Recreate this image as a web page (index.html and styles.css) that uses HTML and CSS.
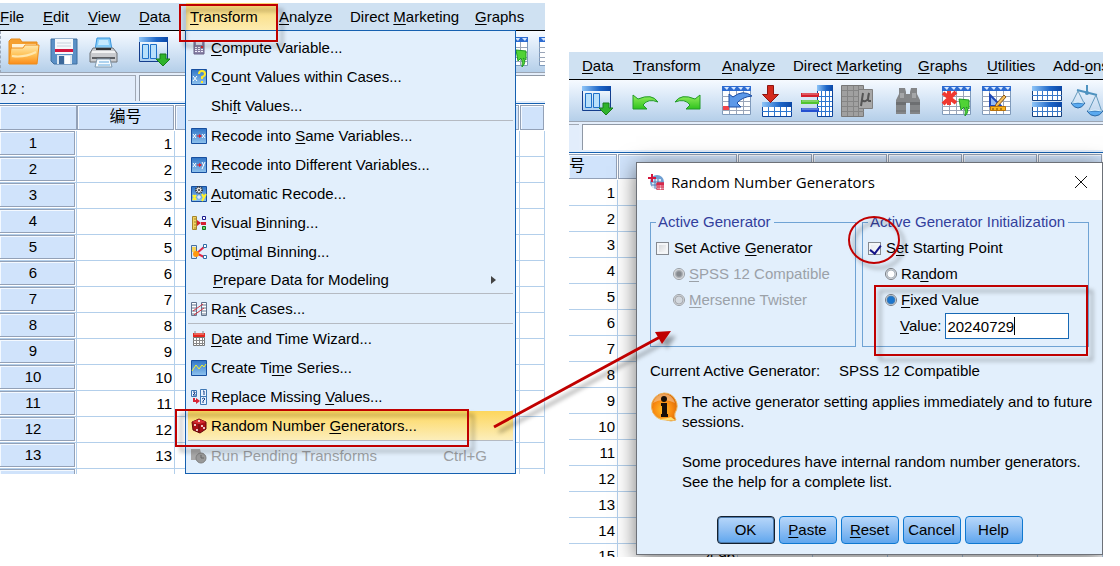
FILE: index.html
```html
<!DOCTYPE html>
<html lang="en">
<head>
<meta charset="utf-8">
<title>Random Number Generators</title>
<link rel="stylesheet" href="styles.css">
</head>
<body>
<svg class="defs" aria-hidden="true">
  <defs>
    <linearGradient id="gBlue" x1="0" x2="1" y1="0" y2="0"><stop offset="0" stop-color="#8fc6f8"/><stop offset=".6" stop-color="#1d66c8"/><stop offset="1" stop-color="#0b47a6"/></linearGradient>
    <linearGradient id="gPane" x1="0" x2="0" y1="0" y2="1"><stop offset="0" stop-color="#ffffff"/><stop offset="1" stop-color="#a9cdee"/></linearGradient>
    <linearGradient id="gFolder" x1="0" x2="0" y1="0" y2="1"><stop offset="0" stop-color="#ffe9b0"/><stop offset=".5" stop-color="#ffc45a"/><stop offset="1" stop-color="#fb8c1a"/></linearGradient>
    <linearGradient id="gGreen" x1="0" x2="0" y1="0" y2="1"><stop offset="0" stop-color="#93ee5c"/><stop offset="1" stop-color="#2fc31e"/></linearGradient>
    <linearGradient id="gTile" x1="0" x2="0" y1="0" y2="1"><stop offset="0" stop-color="#2f74c6"/><stop offset="1" stop-color="#8fc3ee"/></linearGradient>
    <radialGradient id="gInfo" cx=".45" cy=".6" r=".6"><stop offset="0" stop-color="#ffc02a"/><stop offset=".6" stop-color="#f98a10"/><stop offset="1" stop-color="#d96a05"/></radialGradient>
    <filter id="drop" x="-20%" y="-30%" width="150%" height="170%"><feDropShadow dx="5" dy="5" stdDeviation="2" flood-color="#000" flood-opacity=".35"/></filter>

    <symbol id="open" viewBox="0 0 32 32"><path d="M1 28V5l2-2h9l2 3h15v9" fill="#f5a030" stroke="#e58a1c"/><path d="M4 8h24v6H4z" fill="#fff3d6"/><path d="M3 12h12l2-3h14l-2 19H1z" fill="url(#gFolder)" stroke="#ee8d1b"/><path d="M4 20q12 2 24-4" stroke="#ffe7ad" stroke-width="2" fill="none"/></symbol>
    <symbol id="save" viewBox="0 0 32 32"><path d="M3 3h26v25H6l-3-3z" fill="#5b90c6" stroke="#3e6f9f"/><path d="M7 3h18v15H7z" fill="#f5f8fb"/><path d="M9 7h14M9 10h14" stroke="#c7d2dc"/><path d="M7 13h18v3H7z" fill="#d3173f"/><path d="M9 19h15v9H9z" fill="#dce6ee"/><path d="M11 20h5v8h-5z" fill="#3c689a"/><path d="M17 20h5v8h-5z" fill="#fff"/></symbol>
    <symbol id="print" viewBox="0 0 32 32"><path d="M9 2h13l2 12H7z" fill="#86cdf8" stroke="#3793dc"/><path d="M11 4h9l1 5H10z" fill="#c6ebff"/><path d="M5 12h20l4 5v9H2v-9z" fill="#c9cbcf" stroke="#6d7075"/><path d="M4 15h23v2H4z" fill="#f2f3f4"/><path d="M8 12h15v2H8z" fill="#333"/><path d="M4 21h23v2H4z" fill="#5c5f64"/><path d="M9 23h13l2 8H7z" fill="#f6fbff" stroke="#8199ad"/><path d="M11 26h10M10 29h12" stroke="#67aade"/></symbol>
    <symbol id="vars" viewBox="0 0 32 32"><path d="M1.500 1.500h28v24h-28z" fill="url(#gPane)" stroke="#143d8c"/><path d="M1 1h29v5H1z" fill="url(#gBlue)"/><path d="M4.500 8.500h6v14h-6zM12.500 8.500h6v14h-6z" fill="#b8e0fb" stroke="#1d70c8"/><path d="M22 18h6v5h4l-7 7-7-7h4z" fill="#2fb32b" stroke="#187d1c"/></symbol>
    <symbol id="undo" viewBox="0 0 32 32"><path d="M2 10v14h14l-4-4q5-7 15-3-6-9-20-3z" fill="url(#gGreen)" stroke="#229a2a"/></symbol>
    <symbol id="redo" viewBox="0 0 32 32"><path d="M29 10v14H15l4-4q-5-7-15-3 6-9 20-3z" fill="url(#gGreen)" stroke="#229a2a"/></symbol>
    <symbol id="grid" viewBox="0 0 32 32"><path d="M1.500 1.500h28v28h-28z" fill="#fff" stroke="#7f9abb"/><path d="M1 1h29v5H1z" fill="#2d6bd0"/><path d="M3 2h5l-2 3zM10 2h5l-2 3zM17 2h5l-2 3zM24 2h5l-2 3z" fill="#d7e8ff"/><path d="M8.500 6v23M15.500 6v23M22.500 6v23M1 11.500h28M1 16.500h28M1 21.500h28M1 25.500h28" stroke="#9aa5b8"/></symbol>
    <symbol id="goto" viewBox="0 0 32 32"><use href="#grid"/><path d="M2 21h6v4H2z" fill="#f0444b"/><path d="M8 9v13h12l-4-4q5-6 15-7-9-7-19 1z" fill="#5c98e8" stroke="#1d4ea5"/></symbol>
    <symbol id="addcase" viewBox="0 0 32 32"><path d="M1.500 17.500h29v14h-29z" fill="#fff" stroke="#0d449b"/><path d="M1 17h30v5H1z" fill="url(#gBlue)"/><path d="M7.500 22v9M13.500 22v9M19.500 22v9M25.500 22v9M1 26.500h30" stroke="#2d76cf"/><path d="M6.500.500h6v9h5l-8 8-8-8h5z" fill="#d42a1d" stroke="#8f1510"/></symbol>
    <symbol id="addvar" viewBox="0 0 32 32"><path d="M16.500.500h15v31h-15z" fill="#fff" stroke="#0d449b"/><path d="M16 0h16v6H16z" fill="url(#gBlue)"/><path d="M20.500 6v25M24.500 6v25M28.500 6v25M16 11.500h15M16 16.500h15M16 21.500h15M16 26.500h15" stroke="#2d76cf"/><path d="M0 8h18v4H0z" fill="#d4202b"/><path d="M0 15h18v4H0z" fill="#52c431"/><path d="M0 23h18v4H0z" fill="#2450d0"/><path d="M1 9h16M1 16h16M1 24h16" stroke="#fff" opacity=".5"/></symbol>
    <symbol id="mu" viewBox="0 0 32 32"><path d="M.500.500h22v31H.500z" fill="#a0a0a0" stroke="#787878"/><path d="M1 5.500h22M1 11.500h22M1 16.500h22M1 21.500h22M1 26.500h22M6.500 1v30M12.500 1v30M17.500 1v30" stroke="#858585"/><path d="M17.500 4.500h14v19h-14z" fill="#a8a8a8" stroke="#808080"/><path d="M22 8l-2 13M21 15q3 3 6-1l1-6q-2 7 0 8h2" fill="none" stroke="#555" stroke-width="2"/></symbol>
    <symbol id="find" viewBox="0 0 32 32"><path d="M8 3h6l1 4v2h4V7l1-4h6v6l3 6v14H19V18h-4v11H5V15l3-6z" fill="#848688"/><path d="M5 17h10v3H5zM19 17h10v3H19z" fill="#6d6f71"/><path d="M9 8h4v5H9zM21 8h4v5h-4z" fill="#a4a6a8"/><path d="M5 26h10M19 26h10" stroke="#6d6f71"/></symbol>
    <symbol id="missing" viewBox="0 0 32 32"><use href="#grid"/><path d="M8 6v14M2 8l13 10M15 7L2 19" stroke="#f03830" stroke-width="4"/><path d="M18 14l10 1v9l-3-2q4 4-1 9 1-6-1-9l-3 3z" fill="#50d335" stroke="#209a25"/></symbol>
    <symbol id="ruler" viewBox="0 0 32 32"><use href="#grid"/><path d="M9 10v11h11z" fill="#94baf4" stroke="#1e48b8" stroke-width="2"/><path d="M15 19l8-9 2 2-8 9-3 1z" fill="#f4c05b" stroke="#8b5819"/><path d="M9.500 21.500h15v4h-15z" fill="#f9b51c" stroke="#b8720c"/><path d="M12 23v2M16 23v2M20 23v2" stroke="#704509"/></symbol>
    <symbol id="split" viewBox="0 0 32 32"><path d="M1.500 1.500h29v14h-29zM1.500 17.500h29v14h-29z" fill="#fff" stroke="#153f7d"/><path d="M1 1h30v5H1zM1 17h30v5H1z" fill="url(#gBlue)"/><path d="M6.500 6v9M11.500 6v9M16.500 6v9M21.500 6v9M26.500 6v9M6.500 22v9M11.500 22v9M16.500 22v9M21.500 22v9M26.500 22v9M1 10.500h30M1 26.500h30" stroke="#3a78c8"/></symbol>
    <symbol id="scale" viewBox="0 0 32 32"><path d="M16 0v9M6 5l20 5" stroke="#4f93c0" stroke-width="2"/><circle cx="16" cy="8" r="2" fill="#4f93c0"/><path d="M7 6L1 18M7 6l6 12M25 10l-8 17M25 10l6 17" stroke="#669bbd" fill="none"/><path d="M0 18h14q-3 5-7 5t-7-5zM16 26h16q-3 5-8 5t-8-5z" fill="#5aaaf0" stroke="#2b69a5"/><path d="M1 18q6-2 12 0M17 26q7-2 14 0" stroke="#d8f2ff" fill="none"/></symbol>

    <symbol id="tile" viewBox="0 0 16 16"><path d="M.500.500h15v15H.500z" fill="url(#gTile)" stroke="#174f9f"/></symbol>
    <symbol id="calc" viewBox="0 0 16 16"><path d="M3 1h10v13H3z" fill="#8b83a8" stroke="#6b6288"/><path d="M5 2h6v3H5z" fill="#d7dbe8"/><path d="M4 7h2v1H4zM7 7h2v1H7zM4 9h2v1H4zM7 9h2v1H7zM10 9h2v1h-2zM4 11h2v1H4zM7 11h2v1H7zM10 11h2v1h-2z" fill="#f4f2ff"/><path d="M10 6h2v2h-2z" fill="#d92b2b"/></symbol>
    <symbol id="count" viewBox="0 0 16 16"><use href="#tile"/><path d="M2 7l4 5M6 7l-4 5" stroke="#fff"/><path d="M8 5q0-3 3-3t3 3q0 2-3 3v2M11 12v2" stroke="#ffe928" stroke-width="2" fill="none"/></symbol>
    <symbol id="same" viewBox="0 0 16 16"><use href="#tile"/><path d="M2 6l3 4M5 6l-3 4M11 6l3 4M14 6l-3 4" stroke="#fff"/><path d="M6 8h3" stroke="#e01c2c"/><path d="M8 6l3 2-3 2z" fill="#e01c2c"/></symbol>
    <symbol id="diff" viewBox="0 0 16 16"><use href="#tile"/><path d="M2 6l3 4M5 6l-3 4M11 5l2 4M14 5l-3 7" stroke="#fff"/><path d="M6 8h3" stroke="#e01c2c"/><path d="M8 6l3 2-3 2z" fill="#e01c2c"/></symbol>
    <symbol id="auto" viewBox="0 0 16 16"><use href="#tile"/><circle cx="8" cy="4" r="3" fill="#eee" stroke="#333" stroke-width="2" stroke-dasharray="1 1"/><circle cx="8" cy="4" r="1" fill="#333"/><path d="M2 9l3 5M5 9l-3 5M11 8l2 4M15 8l-4 7" stroke="#fff12a" stroke-width="2"/><path d="M6 11h4M8 9v4" stroke="#fff"/></symbol>
    <symbol id="visual" viewBox="0 0 16 16"><path d="M1.500 1.500h4v13h-4z" fill="#f2d462" stroke="#a4842c"/><path d="M3 4h2M3 7h2M3 10h2M3 13h2" stroke="#a4842c"/><path d="M6 5l4 3-4 3z" fill="#d51e2f"/><path d="M11.500 1.500h3v3h-3z" fill="#fff" stroke="#1a1a8e"/><path d="M10 7h5v3h-5z" fill="#d51e2f"/><path d="M11.500 11.500h3v3h-3z" fill="#6fd764" stroke="#157319"/></symbol>
    <symbol id="optimal" viewBox="0 0 16 16"><path d="M.500 1.500h5v13h-5z" fill="#dce9f6" stroke="#476f9d"/><path d="M1 3h4v5H1z" fill="#f4d35b"/><path d="M5 10l8-7M5 9l8 4" stroke="#e02848" stroke-width="2"/><circle cx="5" cy="10" r="3" fill="#ff980e"/><path d="M12.500.500h3v3h-3zM12.500 11.500h3v3h-3z" fill="#fff" stroke="#2f6da5"/></symbol>
    <symbol id="rank" viewBox="0 0 16 16"><path d="M.500 1.500h5v13h-5zM10.500 1.500h5v13h-5z" fill="#fff" stroke="#63758e"/><path d="M1 4h4M1 7h4M1 10h4M1 13h4M11 4h4M11 7h4M11 10h4M11 13h4" stroke="#63758e"/><path d="M2 10l10-7M3 14l10-7" stroke="#d5313d"/></symbol>
    <symbol id="date" viewBox="0 0 16 16"><path d="M2 2h12v4H2z" fill="#e32620"/><path d="M3 3h10" stroke="#ff9b8a"/><path d="M4 0v3M12 0v3" stroke="#888"/><path d="M2.500 6.500h11v8h-11z" fill="#fff" stroke="#777"/><path d="M5.500 7v8M8.500 7v8M11.500 7v8M2 9.500h12M2 12.500h12" stroke="#888"/></symbol>
    <symbol id="series" viewBox="0 0 16 16"><use href="#tile"/><path d="M1 11l4-6 3 4 3-4 2 2 2-3" stroke="#f4f12a" fill="none"/></symbol>
    <symbol id="replace" viewBox="0 0 16 16"><path d="M.500 1.500h5v6h-5zM9.500.500h6v15h-6zM9.500 7.500h6" fill="#e8f3ff" stroke="#3f78b5"/><path d="M2 3h2v1L2 6h3M12 2h1v4M11 10q2-2 3 0l-2 2v2" stroke="#173e86" fill="none"/><path d="M3 9v3h3" stroke="#d92535" stroke-width="2" fill="none"/><path d="M5 9l4 3-4 3z" fill="#d92535"/></symbol>
    <symbol id="dice" viewBox="0 0 16 16"><path d="M1 4l7-3 7 3v7l-6 4-7-3z" fill="#a80f15" stroke="#62080b"/><path d="M1 4l7 2 7-2-7-3z" fill="#d52d31"/><path d="M8 6v9" stroke="#62080b"/><circle cx="8" cy="3" r="1" fill="#fff"/><circle cx="4" cy="7" r="1" fill="#fff"/><circle cx="6" cy="12" r="1" fill="#fff"/><circle cx="11" cy="8" r="1" fill="#fff"/><circle cx="13" cy="10" r="1" fill="#fff"/></symbol>
    <symbol id="pending" viewBox="0 0 16 16"><path d="M0 1h9l1 4v7H0z" fill="#a8a8a8"/><circle cx="10" cy="10" r="5" fill="#999" stroke="#808080"/><path d="M10 7v3h3" stroke="#666" fill="none"/></symbol>
  </defs>
</svg>

<main class="stage">
  <section class="window" aria-label="Data editor with Transform menu">
    <nav class="menubar menubar-full">
      <button><u>F</u>ile</button><button><u>E</u>dit</button><button><u>V</u>iew</button><button><u>D</u>ata</button><button class="active"><u>T</u>ransform</button><button><u>A</u>nalyze</button><button>Direct <u>M</u>arketing</button><button><u>G</u>raphs</button>
    </nav>
    <div class="toolbar toolbar-full">
      <div class="group"><svg><use href="#open"/></svg><svg><use href="#save"/></svg><svg><use href="#print"/></svg></div>
      <div class="group"><svg><use href="#vars"/></svg></div>
      <div class="group"><svg><use href="#undo"/></svg><svg><use href="#redo"/></svg></div>
      <div class="group"><svg><use href="#goto"/></svg><svg><use href="#addcase"/></svg><svg><use href="#addvar"/></svg><svg><use href="#mu"/></svg></div>
      <div class="group"><svg><use href="#find"/></svg></div>
      <div class="group"><svg><use href="#missing"/></svg><svg><use href="#ruler"/></svg></div>
    </div>
    <div class="editor"><div class="cell-name">12 :</div><div class="cell-value"></div></div>
    <table class="sheet">
      <colgroup><col class="w-row"><col class="w-id"><col class="w-wide"><col class="w-std"><col class="w-std"><col class="w-std"><col></colgroup>
      <thead><tr><th class="corner"><span></span></th><th><span>编号</span></th><th><span></span></th><th><span></span></th><th><span></span></th><th><span></span></th><th><span></span></th></tr></thead>
      <tbody>
        <tr><th><span>1</span></th><td>1</td><td></td><td></td><td></td><td></td><td></td></tr>
        <tr><th><span>2</span></th><td>2</td><td></td><td></td><td></td><td></td><td></td></tr>
        <tr><th><span>3</span></th><td>3</td><td></td><td></td><td></td><td></td><td></td></tr>
        <tr><th><span>4</span></th><td>4</td><td></td><td></td><td></td><td></td><td></td></tr>
        <tr><th><span>5</span></th><td>5</td><td></td><td></td><td></td><td></td><td></td></tr>
        <tr><th><span>6</span></th><td>6</td><td></td><td></td><td></td><td></td><td></td></tr>
        <tr><th><span>7</span></th><td>7</td><td></td><td></td><td></td><td></td><td></td></tr>
        <tr><th><span>8</span></th><td>8</td><td></td><td></td><td></td><td></td><td></td></tr>
        <tr><th><span>9</span></th><td>9</td><td></td><td></td><td></td><td></td><td></td></tr>
        <tr><th><span>10</span></th><td>10</td><td></td><td></td><td></td><td></td><td></td></tr>
        <tr><th><span>11</span></th><td>11</td><td></td><td></td><td></td><td></td><td></td></tr>
        <tr><th><span>12</span></th><td>12</td><td></td><td></td><td></td><td></td><td></td></tr>
        <tr><th><span>13</span></th><td>13</td><td></td><td></td><td></td><td></td><td></td></tr>
        <tr class="sliver"><th><span></span></th><td></td><td></td><td></td><td></td><td></td><td></td></tr>
      </tbody>
    </table>

    <div class="menu">
      <button><svg><use href="#calc"/></svg><span><u>C</u>ompute Variable...</span></button>
      <button><svg><use href="#count"/></svg><span>C<u>o</u>unt Values within Cases...</span></button>
      <button><svg></svg><span>Shi<u>f</u>t Values...</span></button>
      <hr>
      <button><svg><use href="#same"/></svg><span>Recode into <u>S</u>ame Variables...</span></button>
      <button><svg><use href="#diff"/></svg><span><u>R</u>ecode into Different Variables...</span></button>
      <button><svg><use href="#auto"/></svg><span><u>A</u>utomatic Recode...</span></button>
      <button><svg><use href="#visual"/></svg><span>Visual <u>B</u>inning...</span></button>
      <button><svg><use href="#optimal"/></svg><span>Opt<u>i</u>mal Binning...</span></button>
      <button class="submenu"><svg></svg><span><u>P</u>repare Data for Modeling</span><i class="arrow"></i></button>
      <hr>
      <button><svg><use href="#rank"/></svg><span>Ran<u>k</u> Cases...</span></button>
      <hr>
      <button><svg><use href="#date"/></svg><span><u>D</u>ate and Time Wizard...</span></button>
      <button><svg><use href="#series"/></svg><span>Create Ti<u>m</u>e Series...</span></button>
      <button><svg><use href="#replace"/></svg><span>Replace Missing <u>V</u>alues...</span></button>
      <button class="active"><svg><use href="#dice"/></svg><span>Random Number <u>G</u>enerators...</span></button>
      <hr>
      <button disabled><svg><use href="#pending"/></svg><span>Run Pending Transforms</span><kbd>Ctrl+G</kbd></button>
    </div>
  </section>

  <section class="window window-right" aria-label="Data editor with dialog">
    <nav class="menubar menubar-part">
      <button><u>D</u>ata</button><button><u>T</u>ransform</button><button><u>A</u>nalyze</button><button>Direct <u>M</u>arketing</button><button><u>G</u>raphs</button><button><u>U</u>tilities</button><button>Add-<u>o</u>ns</button>
    </nav>
    <div class="toolbar toolbar-part">
      <div class="group"><svg><use href="#vars"/></svg></div>
      <div class="group"><svg><use href="#undo"/></svg><svg><use href="#redo"/></svg></div>
      <div class="group"><svg><use href="#goto"/></svg><svg><use href="#addcase"/></svg><svg><use href="#addvar"/></svg><svg><use href="#mu"/></svg></div>
      <div class="group"><svg><use href="#find"/></svg></div>
      <div class="group"><svg><use href="#missing"/></svg><svg><use href="#ruler"/></svg></div>
      <div class="group"><svg><use href="#split"/></svg><svg><use href="#scale"/></svg></div>
    </div>
    <div class="editor"><div class="cell-name short"></div><div class="cell-value"></div></div>
    <table class="sheet">
      <colgroup><col class="w-cut"><col class="w-wide"><col class="w-std"><col class="w-std"><col class="w-std"><col class="w-std"><col></colgroup>
      <thead><tr><th class="cut-head"><span>号</span></th><th><span></span></th><th><span></span></th><th><span></span></th><th><span></span></th><th><span></span></th><th><span></span></th></tr></thead>
      <tbody>
        <tr><td>1</td><td></td><td></td><td></td><td></td><td></td><td></td></tr>
        <tr><td>2</td><td></td><td></td><td></td><td></td><td></td><td></td></tr>
        <tr><td>3</td><td></td><td></td><td></td><td></td><td></td><td></td></tr>
        <tr><td>4</td><td></td><td></td><td></td><td></td><td></td><td></td></tr>
        <tr><td>5</td><td></td><td></td><td></td><td></td><td></td><td></td></tr>
        <tr><td>6</td><td></td><td></td><td></td><td></td><td></td><td></td></tr>
        <tr><td>7</td><td></td><td></td><td></td><td></td><td></td><td></td></tr>
        <tr><td>8</td><td></td><td></td><td></td><td></td><td></td><td></td></tr>
        <tr><td>9</td><td></td><td></td><td></td><td></td><td></td><td></td></tr>
        <tr><td>10</td><td></td><td></td><td></td><td></td><td></td><td></td></tr>
        <tr><td>11</td><td></td><td></td><td></td><td></td><td></td><td></td></tr>
        <tr><td>12</td><td></td><td></td><td></td><td></td><td></td><td></td></tr>
        <tr><td>13</td><td></td><td></td><td></td><td></td><td></td><td></td></tr>
        <tr><td>14</td><td></td><td></td><td></td><td></td><td></td><td></td></tr>
        <tr class="half"><td><div>15</div></td><td><div>4.96</div></td><td></td><td></td><td></td><td></td><td></td></tr>
      </tbody>
    </table>

    <div class="dialog" role="dialog" aria-labelledby="dlg-title">
      <header>
        <svg class="app-icon" viewBox="0 0 16 16"><circle cx="9" cy="8" r="7" fill="#6f9fd2"/><path d="M4 5h9v9H4z" fill="#dce8f7"/><path d="M4 8h9M4 11h9M7 5v9M10 5v9" stroke="#4d78b0"/><path d="M9 9h7v7H9z" fill="#fff" stroke="#c82341"/><path d="M9 11h7v-2H9zM11 11v5M14 11v5M9 13h7" fill="#d6284a" stroke="#d6284a"/><path d="M4 0v8M0 4h8" stroke="#d3163c" stroke-width="2"/></svg>
        <h1 id="dlg-title">Random Number Generators</h1>
        <button class="close" aria-label="Close"><svg viewBox="0 0 14 14"><path d="M1 1l12 12M13 1L1 13" stroke="#111" fill="none"/></svg></button>
      </header>
      <form>
        <div class="panels">
          <fieldset>
            <legend>Active Generator</legend>
            <label><input type="checkbox"><span>Set Active <u>G</u>enerator</span></label>
            <label class="sub off"><input type="radio" name="gen" checked disabled><span><u>S</u>PSS 12 Compatible</span></label>
            <label class="sub off"><input type="radio" name="gen" disabled><span><u>M</u>ersenne Twister</span></label>
          </fieldset>
          <fieldset>
            <legend>Active Generator Initialization</legend>
            <label><input type="checkbox" checked><span>S<u>e</u>t Starting Point</span></label>
            <label class="sub"><input type="radio" name="start"><span>Ra<u>n</u>dom</span></label>
            <label class="sub"><input type="radio" name="start" checked><span><u>F</u>ixed Value</span></label>
            <div class="value"><label for="seed"><span><u>V</u>alue:</span></label><span class="field"><input id="seed" type="text" value="20240729"></span></div>
          </fieldset>
        </div>
        <div class="current"><span>Current Active Generator:</span><span>SPSS 12 Compatible</span></div>
        <div class="notice">
          <svg viewBox="0 0 28 30"><path d="M14 1a13 13 0 0 1 11 20q-1 4 1 7-5 2-10 0A13 13 0 1 1 14 1z" fill="url(#gInfo)" stroke="#ecb45d"/><path d="M3 11q10-6 22 0Q22 2 14 2T3 11z" fill="#fff" opacity=".35"/><path d="M5 26q9 3 20 2l-4-3q-8 3-16 1z" fill="#ffe071"/><circle cx="14" cy="7" r="3" fill="#181008"/><path d="M11 11h6v11h1v3h-7v-3h1v-8h-1z" fill="#181008"/></svg>
          <div><p>The active generator setting applies immediately and to future<br>sessions.</p><p>Some procedures have internal random number generators.<br>See the help for a complete list.</p></div>
        </div>
        <div class="actions"><button type="button" class="default">OK</button><button type="button"><u>P</u>aste</button><button type="button"><u>R</u>eset</button><button type="button">Cancel</button><button type="button">Help</button></div>
      </form>
    </div>
  </section>

  <svg class="marks" viewBox="0 0 1120 566" aria-hidden="true">
    <g fill="none" stroke="#c00000" stroke-width="2" filter="url(#drop)">
      <path d="M180 5h97v36h-97zM176 410h292v36H176zM875 286h212v69H875z"/>
      <ellipse cx="874" cy="240" rx="25" ry="23"/>
      <path d="M494 427L660 337" stroke-width="3"/>
      <path d="M671 331l-16 1 7 12z" fill="#c00000" stroke="none"/>
    </g>
  </svg>
</main>
</body>
</html>
```

FILE: styles.css
```css
* { box-sizing: border-box; }

body {
  margin: 0;
  background: #fff;
  color: #000;
  font: 15px/20px "Liberation Sans", Arial, "Noto Sans CJK SC", sans-serif;
}

button, input { font: inherit; color: inherit; }
button { padding: 0; border: 0; background: none; text-align: left; white-space: nowrap; }
u { text-underline-offset: 2px; text-decoration-thickness: 1px; }
.defs { position: absolute; width: 0; height: 0; }

.stage {
  position: relative;
  display: grid;
  grid-template-columns: 545fr 534fr;
  align-items: start;
  gap: 24px;
  padding: 3px 17px 9px 0;
}

.window { position: relative; overflow: hidden; min-width: 0; }
.window-right { margin-top: 49px; }

/* Menu bar */
.menubar { display: grid; height: 28px; background: #cfe1f2; border-bottom: 1px solid #000; }
.menubar-full { grid-template-columns: 43px 45px 51px 47px 93px 71px 125px 69px; }
.menubar-part { grid-template-columns: 51px 89px 71px 125px 69px 66px 55px; padding-left: 13px; }
.menubar .active { padding-left: 4px; margin-right: 1px; background: linear-gradient(#f8d874, #fdecb0); }

/* Toolbar */
.toolbar {
  display: flex;
  align-items: center;
  gap: 18px;
  height: 42px;
  border-bottom: 1px solid #9aa4b2;
  background: linear-gradient(#f6faff, #dbe9f8 40%, #b5cfe9);
}
.toolbar-full { padding-left: 7px; border-left: 1px dashed #9aa7b8; }
.toolbar-part { padding-left: 12px; }
.group { display: flex; flex: none; gap: 8px; }
.group svg { display: block; width: 32px; height: 32px; }

/* Cell editor */
.editor { display: flex; gap: 3px; height: 31px; padding: 2px 0 2px; background: #e4eefb; border-bottom: 1px solid #1560b0; }
.cell-name { width: 136px; border: solid #a0a8b4; border-width: 1px 1px 0 0; background: #e2edfb; line-height: 26px; }
.cell-name.short { width: 10px; border-right: 0; }
.cell-value { flex: 1; border: solid #8f98a5; border-width: 1px 0 0 1px; background: #fff; }

/* Data sheet */
.sheet { width: 100%; margin-top: 1px; table-layout: fixed; border-spacing: 0; line-height: 24px; }
.w-row { width: 77px; }
.w-id { width: 98px; }
.w-cut { width: 49px; }
.w-wide { width: 120px; }
.w-std { width: 75px; }
.sheet th, .sheet td { height: 26px; padding: 0; font-weight: 400; }
.sheet td { padding-right: 2px; border: solid #b3cfeb; border-width: 0 1px 1px 0; text-align: right; }
.sheet th span { display: block; border: 1px solid #93a1b7; background: #d0e3fb; box-shadow: inset 1px 1px #f4f9ff; }
.sheet thead th { padding: 0 1px 1px 0; }
.sheet thead span { height: 25px; font-size: 16px; line-height: 22px; }
.sheet thead .corner { padding-right: 0; }
.sheet thead .corner span, .sheet .cut-head span { border-left: 0; text-align: left; }
.sheet tbody th { padding: 0 1px 1px 0; border: solid #b3cfeb; border-width: 0 1px 1px 0; line-height: 22px; }
.sheet tbody th span { height: 24px; border-left: 0; padding-right: 8px; }
.sheet .sliver th, .sheet .sliver td { height: 5px; border-bottom: 0; padding-bottom: 0; }
.sheet .sliver th span { height: 5px; border-bottom: 0; }
.sheet .half td { height: 13px; border-bottom: 0; }
.half div { height: 13px; overflow: hidden; line-height: 24px; }

/* Transform menu */
.menu {
  position: absolute;
  top: 27px;
  left: 185px;
  width: 331px;
  padding: 2px 2px 3px;
  border: 1px solid #1560b0;
  background: #e2effc;
}
.menu button { display: flex; align-items: center; gap: 4px; width: 100%; height: 29px; padding-left: 3px; }
.menu svg { width: 16px; height: 16px; flex: none; }
.menu hr { height: 1px; margin: 0; border: 0; background: #b5bac2; }
.menu .submenu { gap: 6px; height: 27px; }
.menu .active { background: linear-gradient(#fdd65c, #fceebb); }
.menu button:disabled { color: #9c9fa3; }
.menu kbd { margin: 0 26px 0 auto; font: inherit; }
.arrow { width: 0; margin: 0 17px 0 auto; border: solid transparent; border-width: 4px 0 4px 5px; border-left-color: #444; }

/* Dialog */
.dialog {
  position: absolute;
  top: 110px;
  left: 67px;
  right: 0;
  border: 1px solid #6d7178;
  background: #e2effc;
  box-shadow: 0 4px 20px rgba(0, 0, 0, .55);
}
.dialog header { display: flex; align-items: center; gap: 7px; height: 37px; padding: 0 14px 0 11px; background: #fff; }
.app-icon { width: 16px; height: 16px; }
.dialog h1 { flex: 1; margin: 0; font: 400 15px/24px "Open Sans", "Noto Sans", sans-serif; }
.close svg { display: block; width: 14px; height: 14px; }
.dialog form { padding: 13px 13px 10px; }
.panels { display: grid; grid-template-columns: 206fr 227fr; gap: 6px; }
fieldset { min-width: 0; margin: 0; padding: 4px 6px 7px 5px; border: 1px solid #6fa3d4; }
legend { padding: 0 3px 0 2px; line-height: 18px; color: #333f9c; white-space: nowrap; }
fieldset label { display: flex; align-items: center; gap: 5px; height: 26px; white-space: nowrap; }
fieldset .sub { padding-left: 17px; gap: 4px; }
.off { color: #9ba1a8; }

input[type="checkbox"] {
  appearance: none;
  width: 13px;
  height: 13px;
  margin: 0;
  border: 1px solid #858a91;
  background: linear-gradient(135deg, #cfd2d6, #fff);
  box-shadow: inset 0 0 0 2px #f4f6f8;
}
input[type="checkbox"]:checked {
  background: linear-gradient(135deg, #e2e6ec, #fff);
}
input[type="checkbox"]:checked::after {
  content: "";
  display: block;
  width: 5px;
  height: 9px;
  margin: 0 0 0 3px;
  border: solid #151589;
  border-width: 0 2px 2px 0;
  transform: rotate(38deg);
}
input[type="radio"] {
  appearance: none;
  width: 12px;
  height: 12px;
  margin: 0;
  border: 1px solid #777c83;
  border-radius: 50%;
  background: radial-gradient(circle, #fff 3px, #9aa5b1 4px, #fff 5px);
}
input[type="radio"]:checked { background: radial-gradient(circle, #1b76ce 3px, #4d7fae 4px, #fff 5px); }
input[type="radio"]:disabled { border-color: #989da3; background: radial-gradient(circle, #d3d8de 3px, #9b9fa5 4px, #f4f4f4 5px); }
input[type="radio"]:checked:disabled { background: radial-gradient(circle, #85898e 2px, #babec3 4px, #f4f4f4 5px); }

.value { display: flex; align-items: center; gap: 4px; height: 26px; padding-left: 32px; }
.field { position: relative; flex: 1; max-width: 124px; }
.field input { display: block; width: 100%; height: 26px; padding: 0 1px; border: 1px solid #1769b5; background: #fff; }
.field::after { content: ""; position: absolute; left: 69px; top: 4px; width: 1px; height: 18px; background: #000; }

.current { display: grid; grid-template-columns: 189px 1fr; margin-top: 14px; }
.notice { display: grid; grid-template-columns: 28px 1fr; gap: 4px; margin-top: 11px; }
.notice svg { width: 28px; height: 30px; }
.notice p { margin: 0 0 20px; white-space: nowrap; }
.notice p:last-child { margin: 0; }

.actions { display: flex; justify-content: center; gap: 4px; margin-top: 24px; }
.actions button {
  width: 58px;
  height: 28px;
  border: 1px solid #0f78d0;
  border-radius: 4px;
  background: linear-gradient(#b7d7fa, #8fbff3 50%, #5fa6ee);
  text-align: center;
}
.actions .default { border: 1px solid #14202e; box-shadow: inset 0 0 0 1px #4d7cae; }

.marks { position: absolute; top: 0; left: 0; width: 1120px; height: 566px; pointer-events: none; }
```
